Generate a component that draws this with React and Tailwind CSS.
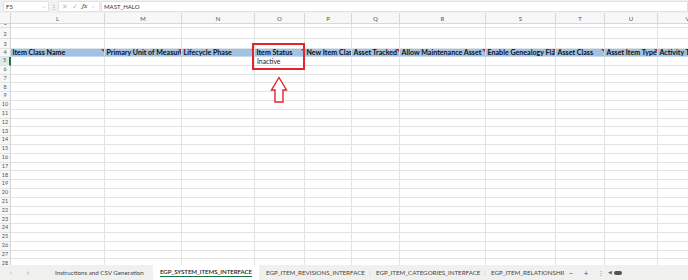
import React from "react";

const cols = [
  { l: "L", w: 94, t: "Item Class Name", c: true },
  { l: "M", w: 77, t: "Primary Unit of Measure", c: true },
  { l: "N", w: 73, t: "Lifecycle Phase", c: true },
  { l: "O", w: 50, t: "Item Status", c: true },
  { l: "P", w: 47, t: "New Item Class", c: false },
  { l: "Q", w: 48, t: "Asset Tracked", c: true },
  { l: "R", w: 86, t: "Allow Maintenance Asset", c: true },
  { l: "S", w: 70, t: "Enable Genealogy Flag", c: true },
  { l: "T", w: 49, t: "Asset Class", c: true },
  { l: "U", w: 53, t: "Asset Item Type", c: true },
  { l: "V", w: 60, t: "Activity Type", c: false },
];

const cellFont = { fontFamily: "Lato, 'Liberation Sans', sans-serif" };

function RowHead({ n, h, sel }) {
  return (
    <div
      className={`w-[11px] shrink-0 flex items-end justify-center overflow-hidden border-r ${
        sel ? "border-r-[#1e7145] border-r-2 bg-[#e3e9e4] text-[#1e7145]" : "border-r-[#d4d4d4] bg-[#f7f7f7] text-[#555]"
      } border-b border-b-[#e3e3e3] text-[5.5px] leading-none pb-[1px]`}
      style={{ height: h }}
    >
      {n}
    </div>
  );
}

function Row({ n, h, children, sel }) {
  return (
    <div className="flex" style={{ height: h }}>
      <RowHead n={n} h={h} sel={sel} />
      {children}
    </div>
  );
}

function EmptyCells({ h }) {
  return cols.map((c) => (
    <div
      key={c.l}
      className="shrink-0 border-r border-b border-[#e3e3e3] bg-white"
      style={{ width: c.w, height: h }}
    />
  ));
}

export default function App() {
  const bodyRows = [];
  for (let i = 5; i <= 28; i++) bodyRows.push(i);
  return (
    <div
      className="w-[688px] h-[280px] overflow-hidden bg-white flex flex-col relative"
      style={cellFont}
    >
      {/* formula bar */}
      <div className="h-[13px] shrink-0 bg-[#f1f1f1] flex items-center pl-[3px] text-[6px] text-[#333]">
        <div className="w-[46px] h-[11px] shrink-0 bg-white border border-[#e2e2e2] rounded-[1px] flex items-center justify-between px-[2px]">
          <span>F5</span>
          <span className="text-[#666] text-[5px]">⌵</span>
        </div>
        <span className="w-[9px] shrink-0 text-center text-[#777] text-[6px]">⋮</span>
        <div className="w-[42px] h-[11px] shrink-0 bg-white border border-[#e2e2e2] rounded-[1px] flex items-center gap-[4px] px-[3px] text-[#bbb]">
          <span className="text-[7px]">✕</span>
          <span className="text-[7px]">✓</span>
          <span className="italic text-[#444] font-serif text-[7px]">fx</span>
          <span className="text-[#888] text-[5px]">⌵</span>
        </div>
        <div className="flex-1 ml-[1px] h-[11px] bg-white border border-[#e2e2e2] rounded-[1px] flex items-center pl-[2px]">
          MAST_HALO
        </div>
      </div>

      {/* grid */}
      <div className="h-[252px] shrink-0 overflow-hidden bg-white">
        {/* column header */}
        <div className="flex h-[11px] bg-[#f7f7f7]">
          <div className="w-[11px] shrink-0 border-r border-b border-[#d4d4d4]" />
          {cols.map((c) => (
            <div
              key={c.l}
              className="shrink-0 border-r border-b border-[#d8d8d8] flex items-center justify-center text-[6px] text-[#555]"
              style={{ width: c.w }}
            >
              {c.l}
            </div>
          ))}
        </div>
        <Row n="1" h={4}>
          <EmptyCells h={4} />
        </Row>
        <Row n="2" h={11}>
          <EmptyCells h={11} />
        </Row>
        <Row n="3" h={10}>
          <EmptyCells h={10} />
        </Row>
        <Row n="4" h={8}>
          {cols.map((c) => (
            <div
              key={c.l}
              className="shrink-0 relative bg-[#9fc2e5] border-r border-[#c6d8ea] border-b border-b-[#c6d8ea] overflow-hidden whitespace-nowrap font-bold text-[7.1px] leading-[8px] text-[#111] pl-[1.5px]"
              style={{ width: c.w, height: 8 }}
            >
              {c.t}
              {c.c && (
                <div className="absolute top-0 right-0 w-0 h-0 border-l-[3px] border-l-transparent border-t-[3px] border-t-[#e0161b]" />
              )}
            </div>
          ))}
        </Row>
        {bodyRows.map((n) => (
          <Row key={n} n={String(n)} h={8.8} sel={n === 5}>
            {cols.map((c) => (
              <div
                key={c.l}
                className="shrink-0 border-r border-b border-[#e3e3e3] bg-white overflow-hidden whitespace-nowrap text-[6.8px] leading-[8px] text-[#222] pl-[2px]"
                style={{ width: c.w, height: 8.8 }}
              >
                {n === 5 && c.l === "O" ? "Inactive" : ""}
              </div>
            ))}
          </Row>
        ))}
      </div>

      {/* sheet tabs */}
      <div className="h-[15px] shrink-0 bg-[#f0f0ee] flex items-center text-[6.2px] text-[#444] whitespace-nowrap">
        <span className="w-[10px] shrink-0 ml-[6px] text-center text-[#aaa] text-[7px]">‹</span>
        <span className="w-[10px] shrink-0 ml-[7px] text-center text-[#666] text-[7px]">›</span>
        <span className="w-[98px] shrink-0 ml-[22px]">Instructions and CSV Generation</span>
        <div className="w-[106px] shrink-0 h-full bg-white flex items-center justify-center">
          <span className="text-[#1a1a1a] border-b border-[#1e7145] leading-[8px] font-semibold tracking-[-0.1px]">
            EGP_SYSTEM_ITEMS_INTERFACE
          </span>
        </div>
        <span className="w-[103px] shrink-0 ml-[7px]">EGP_ITEM_REVISIONS_INTERFACE</span>
        <span className="w-[7px] shrink-0 text-[#ccc]">|</span>
        <span className="w-[108px] shrink-0">EGP_ITEM_CATEGORIES_INTERFACE</span>
        <span className="w-[7px] shrink-0 text-[#ccc]">|</span>
        <div className="w-[73px] shrink-0 overflow-hidden">
          <span>EGP_ITEM_RELATIONSHIPS_INTERFACE</span>
        </div>
        <span className="w-[8px] shrink-0 ml-[3px] text-center text-[#555] text-[8px]">−</span>
        <span className="w-[8px] shrink-0 ml-[7px] text-center text-[#555] text-[8px]">+</span>
        <span className="w-[6px] shrink-0 ml-[8px] text-center text-[#777] text-[6px]">⋮</span>
        <span className="w-[5px] shrink-0 ml-[4px] text-[#666] text-[5px]">◀</span>
        <div className="ml-[1px] w-[8px] h-[4px] shrink-0 rounded-full bg-[#555]" />
      </div>

      {/* annotation: red box and arrow */}
      <div className="absolute left-[252px] top-[43px] w-[53px] h-[27px] border-2 border-[#e3242b]" />
      <svg className="absolute left-[268px] top-[76px]" width="22" height="28" viewBox="0 0 22 28">
        <path
          d="M11 1.5 L18.5 14 L15 14 L15 26 L7 26 L7 14 L3.5 14 Z"
          fill="white"
          stroke="#e3242b"
          strokeWidth="1.4"
          strokeLinejoin="miter"
        />
      </svg>
    </div>
  );
}
